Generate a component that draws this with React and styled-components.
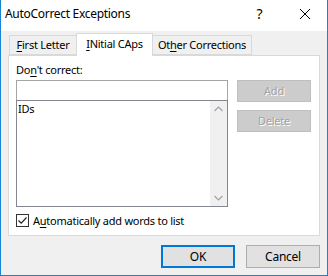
import React from 'react';
import styled, { createGlobalStyle } from 'styled-components';

const Global = createGlobalStyle`
  html, body { margin: 0; padding: 0; background: #fff; }
  * { box-sizing: border-box; }
`;

const Window = styled.div`
  width: 328px;
  height: 276px;
  display: flex;
  flex-direction: column;
  border: 1px solid #1883d7;
  border-top: none;
  font-family: 'Noto Sans', 'Liberation Sans', sans-serif;
  font-size: 11px;
  letter-spacing: -0.25px;
  color: #000;
`;

const TitleBar = styled.div`
  height: 31px;
  background: #fff;
  display: flex;
  align-items: center;
  padding-left: 4px;
`;

const Title = styled.div`
  flex: 1;
  font-size: 12px;
  letter-spacing: -0.3px;
  padding-bottom: 4px;
`;

const TitleButton = styled.div`
  width: 45px;
  height: 31px;
  display: flex;
  align-items: center;
  justify-content: center;
  font-size: 14px;
  padding-bottom: 4px;
`;

const Body = styled.div`
  flex: 1;
  background: #f0f0f0;
  padding: 2px 7px 0 7px;
  display: flex;
  flex-direction: column;
`;

const TabRow = styled.div`
  height: 22px;
  display: flex;
  align-items: flex-end;
  padding-left: 1px;
  position: relative;
  z-index: 1;
`;

const Tab = styled.div`
  width: ${p => p.$w}px;
  height: ${p => (p.$active ? 23 : 20)}px;
  background: ${p => (p.$active ? '#fff' : '#f0f0f0')};
  border: 1px solid #d9d9d9;
  border-bottom: ${p => (p.$active ? 'none' : '1px solid #d9d9d9')};
  margin-bottom: ${p => (p.$active ? -1 : 0)}px;
  margin-left: ${p => (p.$first ? 0 : -1)}px;
  display: flex;
  align-items: center;
  justify-content: center;
  padding-bottom: ${p => (p.$active ? 3 : 1)}px;
`;

const Panel = styled.div`
  height: 181px;
  background: #fff;
  border: 1px solid #d9d9d9;
  padding: 7px 7px 0 7px;
  display: flex;
  flex-direction: column;
`;

const Label = styled.div`
  height: 17px;
  line-height: 14px;
`;

const Content = styled.div`
  display: grid;
  grid-template-columns: 212px 74px;
  column-gap: 9px;
`;

const LeftCol = styled.div`
  display: flex;
  flex-direction: column;
`;

const TextInput = styled.div`
  height: 20px;
  border: 1px solid #a5a5a5;
  border-bottom: none;
`;

const ListBox = styled.div`
  height: 107px;
  border: 1px solid #828790;
  display: flex;
`;

const ListItems = styled.div`
  flex: 1;
  padding: 1px 0 0 1px;
  line-height: 14px;
`;

const ScrollBar = styled.div`
  width: 17px;
  background: #f0f0f0;
  display: flex;
  flex-direction: column;
  justify-content: space-between;
  align-items: center;
  padding: 5px 0 5px;
`;

const RightCol = styled.div`
  display: flex;
  flex-direction: column;
  gap: 8px;
`;

const DisabledButton = styled.div`
  height: 22px;
  background: #cccccc;
  border: 1px solid #bfbfbf;
  color: #a3a3a3;
  text-shadow: 1px 1px 0 #fff;
  display: flex;
  align-items: center;
  justify-content: center;
  padding-bottom: 1px;
`;

const CheckRow = styled.label`
  display: flex;
  align-items: center;
  gap: 4px;
  margin-top: 6px;
`;

const CheckBox = styled.div`
  width: 13px;
  height: 13px;
  border: 1px solid #333;
  background: #fff;
  display: flex;
  align-items: center;
  justify-content: center;
`;

const Footer = styled.div`
  display: flex;
  justify-content: flex-end;
  gap: 11px;
  padding: 9px 0 0 0;
`;

const Button = styled.div`
  width: 74px;
  height: 23px;
  background: #e1e1e1;
  border: ${p => (p.$default ? '2px solid #0078d7' : '1px solid #adadad')};
  display: flex;
  align-items: center;
  justify-content: center;
  font-size: 12px;
  padding-bottom: 1px;
`;

const U = styled.span`
  text-decoration: underline;
  text-underline-offset: 2px;
`;

const Chevron = ({ up }) => (
  <svg width="9" height="6" viewBox="0 0 9 6">
    <path
      d={up ? 'M0.5 5 L4.5 1 L8.5 5' : 'M0.5 1 L4.5 5 L8.5 1'}
      fill="none"
      stroke="#a3a3a3"
      strokeWidth="1.2"
    />
  </svg>
);

export default function App() {
  return (
    <Window>
      <Global />
      <TitleBar>
        <Title>AutoCorrect Exceptions</Title>
        <TitleButton>?</TitleButton>
        <TitleButton>
          <svg width="12" height="12" viewBox="0 0 12 12">
            <path d="M1 1 L11 11 M11 1 L1 11" stroke="#000" strokeWidth="1" />
          </svg>
        </TitleButton>
      </TitleBar>
      <Body>
        <TabRow>
          <Tab $w={68} $first><span><U>F</U>irst Letter</span></Tab>
          <Tab $w={77} $active><span><U>I</U>Nitial CAps</span></Tab>
          <Tab $w={100}><span>Ot<U>h</U>er Corrections</span></Tab>
        </TabRow>
        <Panel>
          <Label>Do<U>n</U>'t correct:</Label>
          <Content>
            <LeftCol>
              <TextInput />
              <ListBox>
                <ListItems>IDs</ListItems>
                <ScrollBar>
                  <Chevron up />
                  <Chevron />
                </ScrollBar>
              </ListBox>
            </LeftCol>
            <RightCol>
              <DisabledButton>Add</DisabledButton>
              <DisabledButton>Delete</DisabledButton>
            </RightCol>
          </Content>
          <CheckRow>
            <CheckBox>
              <svg width="11" height="11" viewBox="0 0 11 11">
                <path d="M1.5 5.5 L4.2 8.2 L9.5 2.5" fill="none" stroke="#222" strokeWidth="1.2" />
              </svg>
            </CheckBox>
            <span>A<U>u</U>tomatically add words to list</span>
          </CheckRow>
        </Panel>
        <Footer>
          <Button $default>OK</Button>
          <Button>Cancel</Button>
        </Footer>
      </Body>
    </Window>
  );
}
